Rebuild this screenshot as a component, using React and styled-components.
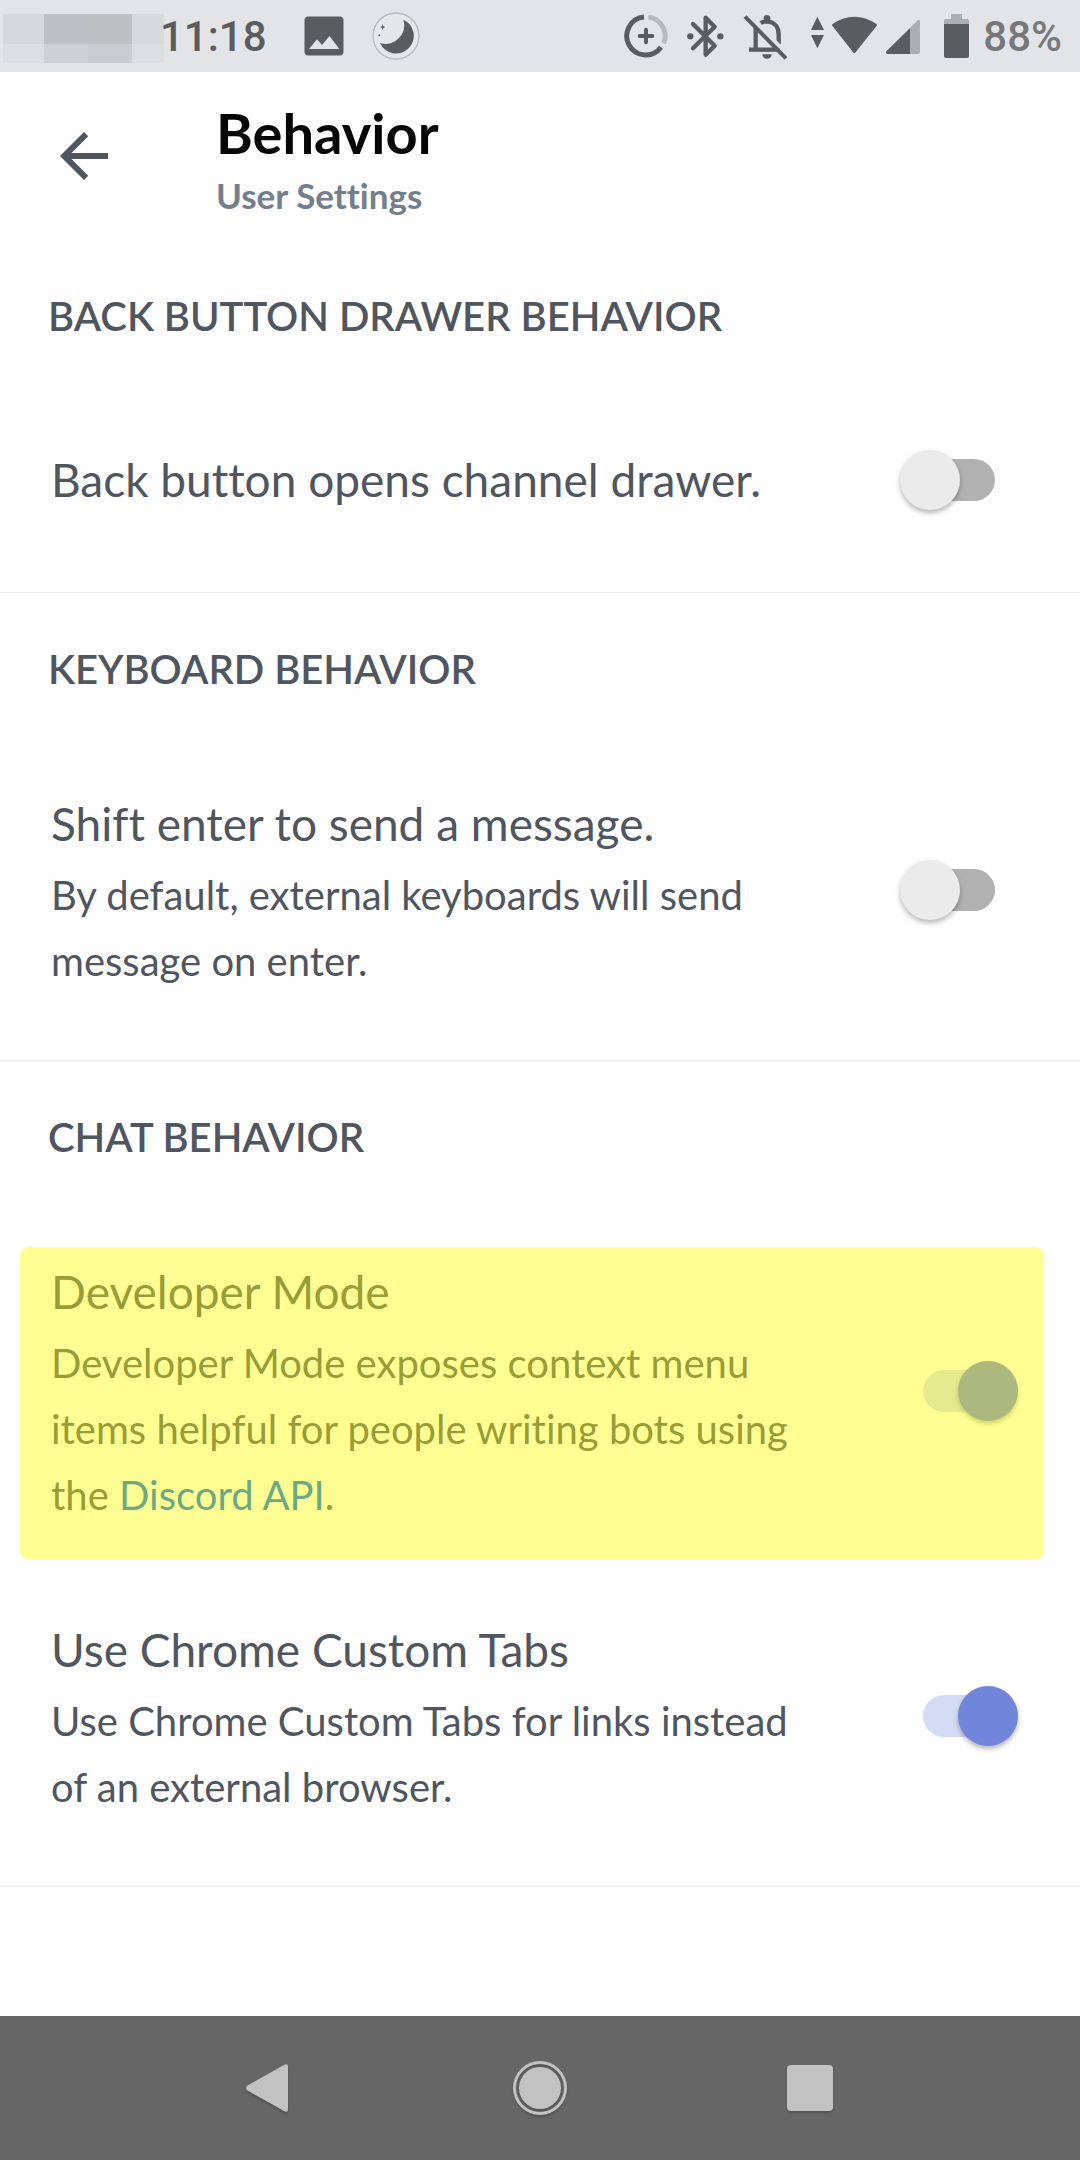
import React, { useState } from "react";
import styled, { createGlobalStyle } from "styled-components";

const GlobalStyle = createGlobalStyle`
  * { box-sizing: border-box; }
  body { margin: 0; background: #fefefe; }
`;

const ink = "#4f5660";
const statusInk = "#5b5c5e";
const statusBg = "#e3e4e8";

const Screen = styled.div`
  display: flex;
  flex-direction: column;
  min-height: 100vh;
  font-family: Lato, "Open Sans", sans-serif;
  font-variant-ligatures: none;
  color: ${ink};
`;

/* ---------- status bar ---------- */

const StatusBar = styled.div`
  display: flex;
  align-items: center;
  justify-content: space-between;
  height: 72px;
  padding: 0 18px 0 3px;
  background: ${statusBg};
  color: ${statusInk};
  font-family: Roboto, sans-serif;
  font-size: 42px;
  font-weight: 500;
  line-height: 48px;
`;

const StatusGroup = styled.div`
  display: flex;
  align-items: center;
`;

const StatusSvg = styled.svg`
  display: block;
  flex: none;
  width: ${(p) => p.$w}px;
  height: 72px;
`;

const Clock = styled.time`
  margin: 0 37px 0 -4px;
  padding-top: 2px;
`;

const BatteryLevel = styled.span`
  padding-top: 2px;
  color: #77787a;
`;

function BlurredCarrier() {
  return (
    <StatusSvg $w={161} viewBox="3 0 161 72" shapeRendering="crispEdges" aria-hidden="true">
      <rect x="3" y="14" width="41" height="30" fill="#d7d8dc" />
      <rect x="44" y="14" width="44" height="30" fill="#bfc0c3" />
      <rect x="88" y="14" width="44" height="30" fill="#bfc0c1" />
      <rect x="132" y="14" width="32" height="30" fill="#d8d9dd" />
      <rect x="3" y="44" width="41" height="19" fill="#dddee2" />
      <rect x="44" y="44" width="44" height="19" fill="#cfd0d3" />
      <rect x="88" y="44" width="44" height="19" fill="#cbccd0" />
      <rect x="132" y="44" width="32" height="19" fill="#dddee2" />
    </StatusSvg>
  );
}

function PictureIcon() {
  return (
    <StatusSvg $w={67} viewBox="304 0 67 72" aria-hidden="true">
      <rect x="304.5" y="16.5" width="39" height="39" rx="4" fill={statusInk} />
      <path d="M309 49 L317 39.3 L322 45 L329.5 36 L339.3 49 Z" fill={statusBg} />
    </StatusSvg>
  );
}

function MoonIcon() {
  return (
    <StatusSvg $w={50} viewBox="1113 0 150 216" aria-hidden="true">
      <circle cx="1188" cy="108" r="69" fill="#e6e7e9" stroke="#b9babd" strokeWidth="4" />
      <path d="M1210 59 A53 53 0 1 1 1140 129 A56 56 0 0 0 1210 59 Z" fill={statusInk} />
      <path d="M1148 71 L1150 79 L1156 81 L1150 84 L1148 92 L1146 84 L1140 81 L1146 79 Z" fill={statusInk} />
      <circle cx="1138" cy="106" r="3" fill={statusInk} />
    </StatusSvg>
  );
}

function DataSaverIcon() {
  return (
    <StatusSvg $w={64} viewBox="42 0 192 216" fill="none" strokeWidth="15" aria-hidden="true">
      <path d="M132 51.3 A57 57 0 1 0 183 142" stroke={statusInk} />
      <path d="M145 51.4 A57 57 0 0 1 191 130" stroke="#b9babc" />
      <path d="M119 108 H157 M138 89 V127" stroke={statusInk} strokeWidth="12" strokeLinecap="round" />
    </StatusSvg>
  );
}

function BluetoothIcon() {
  return (
    <StatusSvg $w={54} viewBox="234 0 162 216" aria-hidden="true">
      <path
        d="M279 72 L344 137 L317 164 V53 L344 80 L279 145"
        fill="none"
        stroke={statusInk}
        strokeWidth="13"
        strokeLinecap="round"
        strokeLinejoin="round"
      />
      <circle cx="271" cy="109" r="9.5" fill={statusInk} />
      <circle cx="361" cy="109" r="9.5" fill={statusInk} />
    </StatusSvg>
  );
}

function BellOffIcon() {
  return (
    <StatusSvg $w={68} viewBox="396 0 204 216" fill="none" stroke={statusInk} strokeWidth="13" aria-hidden="true">
      <path d="M482 69 Q490 64 502 64 C524 66 536 82 536 104 V132" />
      <path d="M467 84 V148" />
      <path d="M447 149 H540" />
      <circle cx="501" cy="55" r="10" fill={statusInk} stroke="none" />
      <path d="M487 163 H515 A14 13 0 0 1 487 163 Z" fill={statusInk} stroke="none" />
      <path d="M443 41 L567 167" stroke={statusBg} strokeWidth="11" />
      <path d="M435 50 L558 175" strokeWidth="12" />
    </StatusSvg>
  );
}

function WifiIcon() {
  return (
    <StatusSvg $w={80} viewBox="600 0 240 216" fill={statusInk} aria-hidden="true">
      <path d="M652 50 L672 90 H633 Z" />
      <path d="M652 145 L672 105 H633 Z" />
      <path
        d="M700 75 Q763 34 827 75 L763 155 Z"
        stroke={statusInk}
        strokeWidth="8"
        strokeLinejoin="round"
      />
    </StatusSvg>
  );
}

function SignalIcon() {
  return (
    <StatusSvg $w={48} viewBox="840 0 144 216" aria-hidden="true">
      <path d="M930 84 L953 61 Q960 57 960 64 V157 Q960 162 955 162 H930 Z" fill="#adaeb1" />
      <path d="M930 84 V162 H862 Q855 160 860 153 Z" fill={statusInk} />
    </StatusSvg>
  );
}

function BatteryIcon() {
  return (
    <StatusSvg $w={55} viewBox="984 0 165 216" aria-hidden="true">
      <path d="M1053 42 H1086 V57 H1101 Q1107 57 1107 63 V72 H1032 V63 Q1032 57 1038 57 H1053 Z" fill="#adaeb1" />
      <path d="M1032 72 H1107 V168 Q1107 174 1101 174 H1038 Q1032 174 1032 168 Z" fill={statusInk} />
    </StatusSvg>
  );
}

/* ---------- app bar ---------- */

const AppBar = styled.header`
  display: flex;
  align-items: flex-start;
  gap: 96px;
  padding: 27px 48px 16px;
`;

const BackButton = styled.button`
  display: block;
  width: 72px;
  height: 114px;
  padding: 0;
  border: 0;
  background: none;
  color: ${ink};
`;

const BackSvg = styled.svg`
  display: block;
  width: 72px;
  height: 72px;
`;

const PageTitle = styled.h1`
  margin: 0;
  color: #060607;
  font-size: 56px;
  font-weight: 700;
  line-height: 68px;
`;

const PageSubtitle = styled.p`
  margin: 0;
  color: #747f8d;
  font-size: 35px;
  font-weight: 700;
  line-height: 56px;
`;

/* ---------- settings ---------- */

const Content = styled.main`
  flex: 1;
  padding-bottom: 48px;
`;

const Section = styled.section`
  padding: 52px 0 24px;
  border-bottom: 1px solid #e9eaec;

  &:first-child {
    padding-top: 53px;
  }
`;

const SectionTitle = styled.h2`
  margin: 0 48px 51px;
  font-size: 40px;
  font-weight: 600;
  line-height: 48px;
  text-transform: uppercase;
`;

const Row = styled.div`
  position: relative;
  display: flex;
  align-items: center;
  gap: 84px;
  min-height: 177px;
  padding: 42px 62px 42px 51px;
`;

const RowText = styled.div`
  flex: 1;
`;

const RowTitle = styled.label`
  display: block;
  font-size: 46px;
  line-height: 76px;
`;

const RowDescription = styled.p`
  margin: 0;
  font-size: 40px;
  line-height: 66px;
`;

const Link = styled.a`
  color: #006ce4;
  text-decoration: none;
`;

const Switch = styled.input.attrs({ type: "checkbox", role: "switch" })`
  appearance: none;
  display: grid;
  flex: none;
  align-items: center;
  width: 118px;
  height: 60px;
  margin: 0;

  &::before,
  &::after {
    content: "";
    grid-area: 1 / 1;
  }

  &::before {
    justify-self: center;
    width: 72px;
    height: 42px;
    border-radius: 21px;
    background: #b1b1b1;
  }

  &::after {
    justify-self: start;
    width: 60px;
    height: 60px;
    border-radius: 50%;
    background: #ebebeb;
    box-shadow: 0 3px 5px rgba(0, 0, 0, 0.28);
  }

  &:checked::before {
    background: #d4dbf5;
  }

  &:checked::after {
    justify-self: end;
    background: #7085d9;
  }
`;

const Marker = styled.div`
  position: absolute;
  inset: 35px 36px 10px 20px;
  border-radius: 9px;
  background: rgba(255, 255, 0, 0.42);
  pointer-events: none;
`;

function Setting({ id, title, children, defaultOn = false, marked = false }) {
  const [on, setOn] = useState(defaultOn);
  return (
    <Row>
      <RowText>
        <RowTitle htmlFor={id}>{title}</RowTitle>
        {children && <RowDescription>{children}</RowDescription>}
      </RowText>
      <Switch id={id} checked={on} onChange={(e) => setOn(e.target.checked)} />
      {marked && <Marker />}
    </Row>
  );
}

/* ---------- navigation bar ---------- */

const NavBar = styled.nav`
  display: flex;
  height: 144px;
  padding: 0 12.5%;
  background: #666;
`;

const NavButton = styled.button`
  display: flex;
  flex: 1;
  align-items: center;
  justify-content: center;
  padding: 0;
  border: 0;
  background: none;
`;

const NavSvg = styled.svg`
  display: block;
  width: 60px;
  height: 60px;
  fill: #c2c2c2;
  filter: drop-shadow(0 2px 1px rgba(0, 0, 0, 0.2));
`;

export default function App() {
  return (
    <Screen>
      <GlobalStyle />
      <StatusBar>
        <StatusGroup>
          <BlurredCarrier />
          <Clock>11:18</Clock>
          <PictureIcon />
          <MoonIcon />
        </StatusGroup>
        <StatusGroup>
          <DataSaverIcon />
          <BluetoothIcon />
          <BellOffIcon />
          <WifiIcon />
          <SignalIcon />
          <BatteryIcon />
          <BatteryLevel>88%</BatteryLevel>
        </StatusGroup>
      </StatusBar>

      <AppBar>
        <BackButton aria-label="Back">
          <BackSvg viewBox="0 0 24 24" fill="currentColor" aria-hidden="true">
            <path d="M20 11H7.83l5.59-5.59L12 4l-8 8 8 8 1.41-1.41L7.83 13H20v-2z" />
          </BackSvg>
        </BackButton>
        <div>
          <PageTitle>Behavior</PageTitle>
          <PageSubtitle>User Settings</PageSubtitle>
        </div>
      </AppBar>

      <Content>
        <Section>
          <SectionTitle>Back button drawer behavior</SectionTitle>
          <Setting id="back-drawer" title="Back button opens channel drawer." />
        </Section>

        <Section>
          <SectionTitle>Keyboard behavior</SectionTitle>
          <Setting id="shift-enter" title="Shift enter to send a message.">
            By default, external keyboards will send message on enter.
          </Setting>
        </Section>

        <Section>
          <SectionTitle>Chat behavior</SectionTitle>
          <Setting id="developer-mode" title="Developer Mode" defaultOn marked>
            Developer Mode exposes context menu items helpful for people writing bots using the{" "}
            <Link href="#api">Discord API</Link>.
          </Setting>
          <Setting id="custom-tabs" title="Use Chrome Custom Tabs" defaultOn>
            Use Chrome Custom Tabs for links instead of an external browser.
          </Setting>
        </Section>
      </Content>

      <NavBar>
        <NavButton aria-label="Back">
          <NavSvg viewBox="0 0 60 60">
            <path d="M7.5 27.5 L45 6.6 Q48 5 48 9 V51 Q48 55 45 53.4 L7.5 32.5 Q4.5 30 7.5 27.5 Z" />
          </NavSvg>
        </NavButton>
        <NavButton aria-label="Home">
          <NavSvg viewBox="0 0 60 60">
            <circle cx="30" cy="30" r="25.5" fill="none" stroke="#c2c2c2" strokeWidth="3" />
            <circle cx="30" cy="30" r="21" />
          </NavSvg>
        </NavButton>
        <NavButton aria-label="Overview">
          <NavSvg viewBox="0 0 60 60">
            <rect x="7" y="7" width="46" height="46" rx="4" />
          </NavSvg>
        </NavButton>
      </NavBar>
    </Screen>
  );
}
